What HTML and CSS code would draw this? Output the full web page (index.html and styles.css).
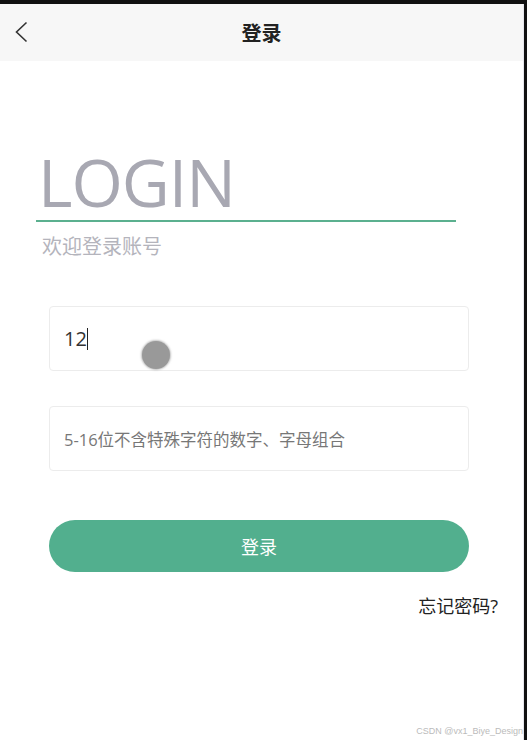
FILE: index.html
```html
<!DOCTYPE html>
<html lang="zh-CN">
<head>
    <meta charset="UTF-8">
    <meta name="viewport" content="width=device-width, initial-scale=1.0">
    <title>登录</title>
    <link rel="stylesheet" href="styles.css">
</head>
<body>
    <div class="app">
        <!-- 顶部导航 -->
        <div class="nav-bar">
            <span class="nav-back">
                <svg width="14" height="22" viewBox="0 0 14 22">
                    <path d="M12.5 1.5 L2.5 11 L12.5 20.5" fill="none" stroke="#333" stroke-width="1.6"/>
                </svg>
            </span>
            <span class="nav-title">登录</span>
        </div>

        <!-- 标题 -->
        <div class="login-head">
            <div class="login-title">LOGIN</div>
            <div class="login-sub">欢迎登录账号</div>
        </div>

        <!-- 表单 -->
        <div class="login-form">
            <div class="field">
                <span class="field-value">12</span><span class="caret"></span>
                <span class="touch-dot"></span>
            </div>
            <div class="field">
                <span class="field-placeholder">5-16位不含特殊字符的数字、字母组合</span>
            </div>
            <button class="login-btn">登录</button>
            <div class="forget">忘记密码?</div>
        </div>

        <div class="watermark">CSDN @vx1_Biye_Design</div>
    </div>
</body>
</html>
```

FILE: styles.css
```css
/* 整体 */
* {
    box-sizing: border-box;
}

body {
    margin: 0;
    background-color: #111;
    font-family: "Open Sans", "Noto Sans CJK SC", sans-serif;
    color: #333;
}

.app {
    position: relative;
    margin: 4px 3px 0 0;
    height: 736px;
    background-color: #fff;
    border-right: 1px solid #e6e6ec;
    overflow: hidden;
}

/* 导航栏 */
.nav-bar {
    height: 57px;
    background-color: #f7f7f7;
    display: flex;
    align-items: center;
    justify-content: center;
    position: relative;
}

.nav-back {
    position: absolute;
    left: 14px;
    top: 17px;
    display: flex;
}

.nav-title {
    font-size: 20px;
    font-weight: bold;
    color: #222;
}

/* 标题区 */
.login-head {
    margin: 82px 0 0 36px;
    width: 420px;
}

.login-title {
    font-family: "Open Sans", sans-serif;
    font-size: 66px;
    line-height: 76px;
    color: #a8a8b2;
    padding-left: 2px;
    letter-spacing: -1px;
    border-bottom: 2px solid #5bb08f;
    padding-bottom: 1px;
}

.login-sub {
    margin-top: 9px;
    padding-left: 6px;
    font-size: 20px;
    color: #b4b4bc;
}

/* 表单 */
.login-form {
    margin: 46px 0 0 49px;
    width: 420px;
}

.field {
    position: relative;
    height: 65px;
    border: 1px solid #ececec;
    border-radius: 4px;
    display: flex;
    align-items: center;
    padding-left: 14px;
    margin-bottom: 35px;
}

.field-value {
    font-size: 20px;
    color: #333;
}

.caret {
    display: inline-block;
    width: 1px;
    height: 22px;
    background-color: #222;
}

.field-placeholder {
    font-size: 16.5px;
    color: #777;
}

.touch-dot {
    position: absolute;
    left: 92px;
    top: 34px;
    width: 28px;
    height: 28px;
    border-radius: 50%;
    background-color: #999;
    box-shadow: 0 0 2px 1px rgba(150, 150, 150, 0.6);
}

.login-btn {
    display: block;
    width: 420px;
    height: 52px;
    margin-top: 49px;
    border: none;
    border-radius: 26px;
    background-color: #52af8e;
    color: #fff;
    font-family: "Open Sans", "Noto Sans CJK SC", sans-serif;
    font-size: 18px;
}

.forget {
    margin: 20px -29px 0 0;
    text-align: right;
    font-size: 18px;
    color: #222;
}

.watermark {
    position: absolute;
    right: 0;
    bottom: 4px;
    font-family: "Liberation Sans", sans-serif;
    font-size: 9px;
    color: #bbb;
    white-space: nowrap;
}
```
